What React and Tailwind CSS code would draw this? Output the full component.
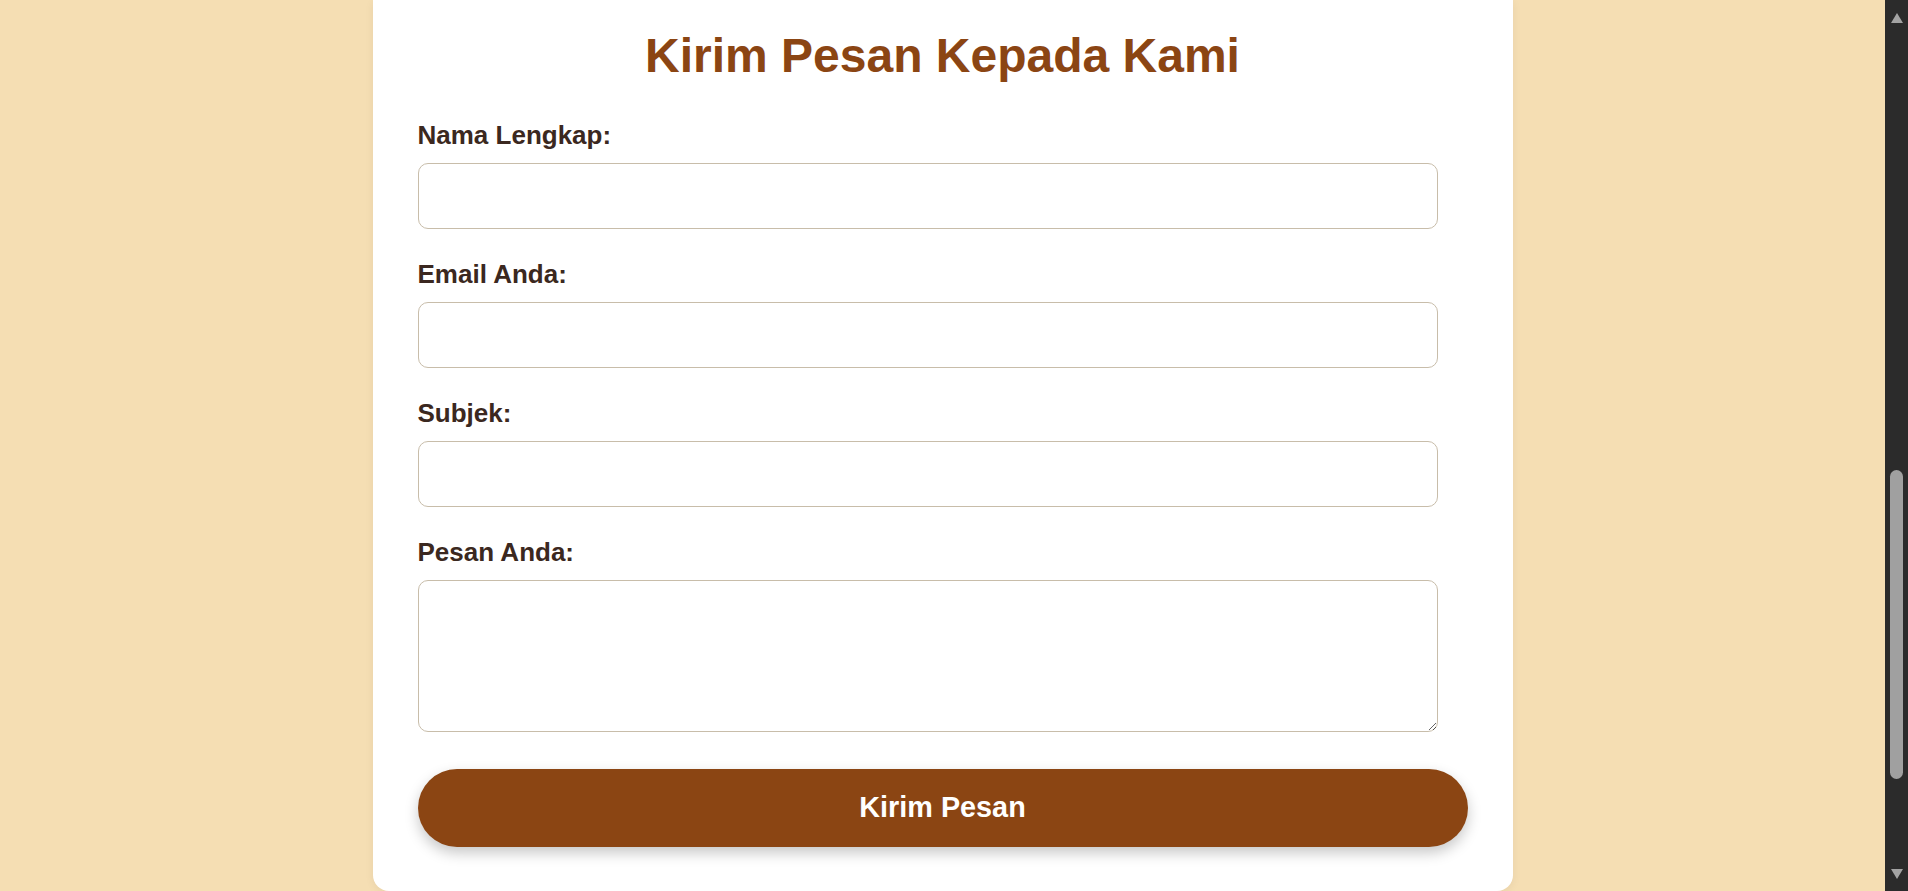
export default function App() {
  const font = { fontFamily: '"Liberation Sans", Arial, sans-serif' };
  const labelCls = "block text-[26px] leading-[30px] font-bold text-[#3b2820] mb-[13px]";
  const inputCls =
    "block w-[calc(100%-30px)] h-[66px] border border-[#c8bdaa] rounded-[10px] bg-white px-[15px] text-[20px] outline-none";
  return (
    <div className="flex h-[891px] w-full overflow-hidden bg-[#F5DEB3]" style={font}>
      <div className="flex flex-1 justify-center">
        <div className="w-[1140px] h-[891px] bg-white rounded-b-[16px] px-[45px] pt-[28px] shadow-[0_2px_10px_rgba(0,0,0,0.06)]">
          <h1 className="text-center text-[48px] leading-[55px] font-bold text-[#8B4513]">
            Kirim Pesan Kepada Kami
          </h1>
          <form className="mt-[37px]" onSubmit={(e) => e.preventDefault()}>
            <label className={labelCls}>Nama Lengkap:</label>
            <input type="text" className={inputCls} />
            <label className={labelCls + " mt-[30px]"}>Email Anda:</label>
            <input type="email" className={inputCls} />
            <label className={labelCls + " mt-[30px]"}>Subjek:</label>
            <input type="text" className={inputCls} />
            <label className={labelCls + " mt-[30px]"}>Pesan Anda:</label>
            <textarea className="block w-[calc(100%-30px)] h-[152px] border border-[#c8bdaa] rounded-[10px] bg-white px-[15px] py-[10px] text-[20px] outline-none" />
            <button
              type="submit"
              className="mt-[37px] w-full h-[78px] rounded-full bg-[#8B4513] text-white text-[28.8px] font-bold shadow-[0_6px_14px_rgba(0,0,0,0.22)]"
            >
              Kirim Pesan
            </button>
          </form>
        </div>
      </div>
      <div className="relative w-[23px] h-full bg-[#2b2b2b] shrink-0">
        <div className="absolute left-[6px] top-[13px] w-0 h-0 border-l-[6px] border-r-[6px] border-b-[10px] border-l-transparent border-r-transparent border-b-[#a3a3a3]" />
        <div className="absolute left-[5px] top-[470px] w-[13px] h-[309px] rounded-full bg-[#a0a0a0]" />
        <div className="absolute left-[6px] top-[869px] w-0 h-0 border-l-[6px] border-r-[6px] border-t-[10px] border-l-transparent border-r-transparent border-t-[#a3a3a3]" />
      </div>
    </div>
  );
}
